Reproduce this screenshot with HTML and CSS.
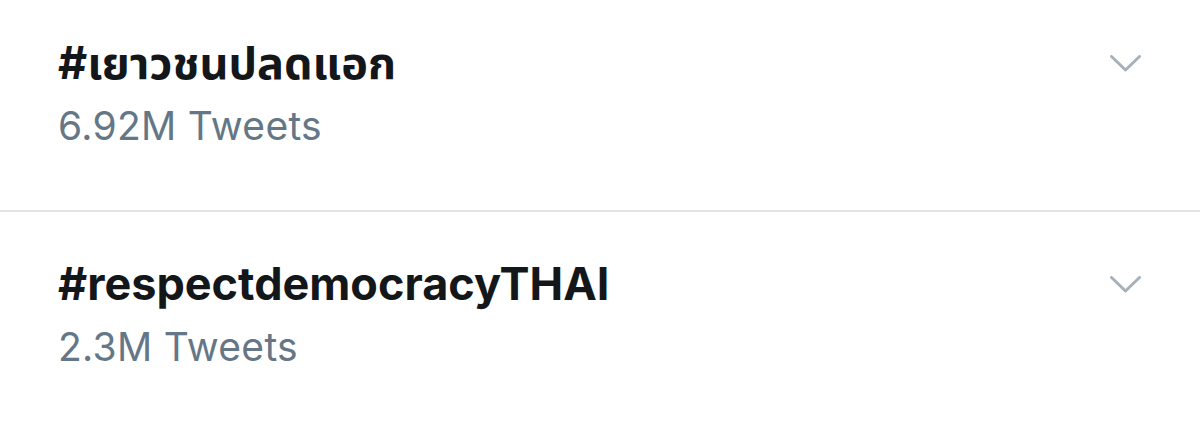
FILE: index.html
```html
<!DOCTYPE html>
<html lang="th">
<head>
    <meta charset="UTF-8">
    <meta name="viewport" content="width=device-width, initial-scale=1.0">
    <title>Trends</title>
    <link rel="stylesheet" href="styles.css">
</head>
<body>
<ul class="trends">
    <li class="trend trend-thai">
        <div class="trend-info">
            <div class="trend-name">#เยาวชนปลดแอก</div>
            <div class="trend-count">6.92M Tweets</div>
        </div>
        <svg class="caret" width="31" height="17" viewBox="0 0 31 17">
            <path d="M1.5 1.5 L15.5 15 L29.5 1.5" fill="none" stroke="#a7b1ba" stroke-width="3" stroke-linecap="round" stroke-linejoin="round"/>
        </svg>
    </li>
    <li class="trend">
        <div class="trend-info">
            <div class="trend-name">#respectdemocracyTHAI</div>
            <div class="trend-count">2.3M Tweets</div>
        </div>
        <svg class="caret" width="31" height="17" viewBox="0 0 31 17">
            <path d="M1.5 1.5 L15.5 15 L29.5 1.5" fill="none" stroke="#a7b1ba" stroke-width="3" stroke-linecap="round" stroke-linejoin="round"/>
        </svg>
    </li>
</ul>
</body>
</html>
```

FILE: styles.css
```css
body {
    margin: 0;
    padding: 0;
    background-color: #fff;
    font-family: Inter, "Liberation Sans", "Noto Sans Thai", "Noto Sans", sans-serif;
}

.trends {
    list-style: none;
    margin: 0;
    padding: 0;
}

.trend {
    display: flex;
    justify-content: space-between;
    align-items: flex-start;
    height: 212px;
    box-sizing: border-box;
    padding: 45px 59px 0 58px;
    border-bottom: 2px solid #e3e4e6;
}

.trend:last-child {
    border-bottom: none;
}

.trend-thai {
    padding-top: 36px;
}

.trend-name {
    font-size: 45px;
    line-height: 54px;
    font-weight: 700;
    color: #14171a;
}

.trend-count {
    margin-top: 13px;
    font-size: 39px;
    line-height: 46px;
    letter-spacing: 0.3px;
    color: #657786;
}

.caret {
    margin-top: 19px;
}
```
